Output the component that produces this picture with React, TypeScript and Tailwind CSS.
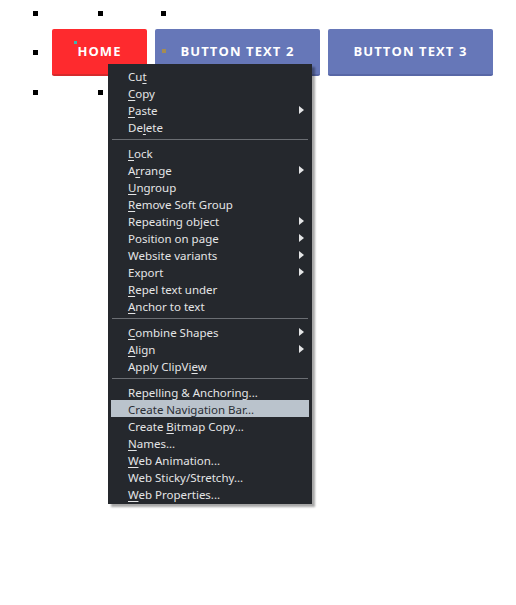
import React from "react"

type Item = {
  label: string
  key?: number
  sub?: boolean
  active?: boolean
}

const groups: Item[][] = [
  [
    { label: "Cut", key: 2 },
    { label: "Copy", key: 0 },
    { label: "Paste", key: 0, sub: true },
    { label: "Delete", key: 2 },
  ],
  [
    { label: "Lock", key: 0 },
    { label: "Arrange", key: 1, sub: true },
    { label: "Ungroup", key: 0 },
    { label: "Remove Soft Group", key: 0 },
    { label: "Repeating object", sub: true },
    { label: "Position on page", sub: true },
    { label: "Website variants", sub: true },
    { label: "Export", sub: true },
    { label: "Repel text under", key: 0 },
    { label: "Anchor to text", key: 0 },
  ],
  [
    { label: "Combine Shapes", key: 0, sub: true },
    { label: "Align", key: 0, sub: true },
    { label: "Apply ClipView", key: 12 },
  ],
  [
    { label: "Repelling & Anchoring..." },
    { label: "Create Navigation Bar...", active: true },
    { label: "Create Bitmap Copy...", key: 7 },
    { label: "Names...", key: 0 },
    { label: "Web Animation...", key: 0 },
    { label: "Web Sticky/Stretchy..." },
    { label: "Web Properties...", key: 0 },
  ],
]

function Label({ item }: { item: Item }) {
  if (item.key === undefined) return <span>{item.label}</span>
  const k = item.key
  return (
    <span>
      {item.label.slice(0, k)}
      <span className="underline underline-offset-2">{item.label[k]}</span>
      {item.label.slice(k + 1)}
    </span>
  )
}

function MenuRow({ item }: { item: Item }) {
  return (
    <div
      className={
        "relative flex items-center h-[17px] mx-[3px] pl-[17px] pt-[1px] " +
        (item.active ? "bg-[#bac3cc] text-[#2a2e34]" : "text-[#e4e5e6]")
      }
    >
      <Label item={item} />
      {item.sub && (
        <svg className="absolute right-[5px] top-[5px]" width="5" height="8" viewBox="0 0 5 8">
          <path d="M0 0 L5 4 L0 8 Z" fill="#e4e5e6" />
        </svg>
      )}
    </div>
  )
}

function Handle({ x, y }: { x: string; y: string }) {
  return <div className={"absolute w-[5px] h-[5px] bg-black " + x + " " + y} />
}

export default function App() {
  return (
    <div className="relative w-[516px] h-[605px] bg-white overflow-hidden">
      <div className="flex gap-2 pl-[52px] pt-[29px]" style={{ fontFamily: "'Open Sans', sans-serif" }}>
        <div className="relative w-[95px] h-[47px] rounded-[2px] bg-[#fe2a2e] border-b-2 border-[#d62a2c] flex items-center justify-center">
          <span className="text-white font-bold text-[13px] tracking-[1.1px]">HOME</span>
          <div className="absolute left-[22px] top-[12px] w-[3px] h-[3px] bg-[#3fb3b0]" />
        </div>
        <div className="relative w-[165px] h-[47px] rounded-[2px] bg-[#6677b8] border-b-2 border-[#5867a6] flex items-center justify-center">
          <span className="text-white font-bold text-[13px] tracking-[1.1px]">BUTTON TEXT 2</span>
          <div className="absolute left-[7px] top-[20px] w-[4px] h-[4px] bg-[#a58c52]" />
        </div>
        <div className="w-[165px] h-[47px] rounded-[2px] bg-[#6677b8] border-b-2 border-[#5867a6] flex items-center justify-center">
          <span className="text-white font-bold text-[13px] tracking-[1.1px]">BUTTON TEXT 3</span>
        </div>
      </div>

      <Handle x="left-[33px]" y="top-[11px]" />
      <Handle x="left-[98px]" y="top-[11px]" />
      <Handle x="left-[161px]" y="top-[11px]" />
      <Handle x="left-[33px]" y="top-[50px]" />
      <Handle x="left-[33px]" y="top-[90px]" />
      <Handle x="left-[98px]" y="top-[90px]" />

      <div
        className="absolute left-[108px] top-[64px] w-[204px] bg-[#25282d] pt-[3px] pb-[2px] text-[11.5px] leading-[17px] shadow-[3px_3px_2px_rgba(0,0,0,0.35)]"
        style={{ fontFamily: "'Noto Sans', sans-serif" }}
      >
        {groups.map((g, i) => (
          <div key={i}>
            {i > 0 && (
              <div className="h-[9px] flex items-center px-[4px]">
                <div className="h-px w-full bg-[#6b6e73]" />
              </div>
            )}
            {g.map((it) => (
              <MenuRow key={it.label} item={it} />
            ))}
          </div>
        ))}
      </div>
    </div>
  )
}
